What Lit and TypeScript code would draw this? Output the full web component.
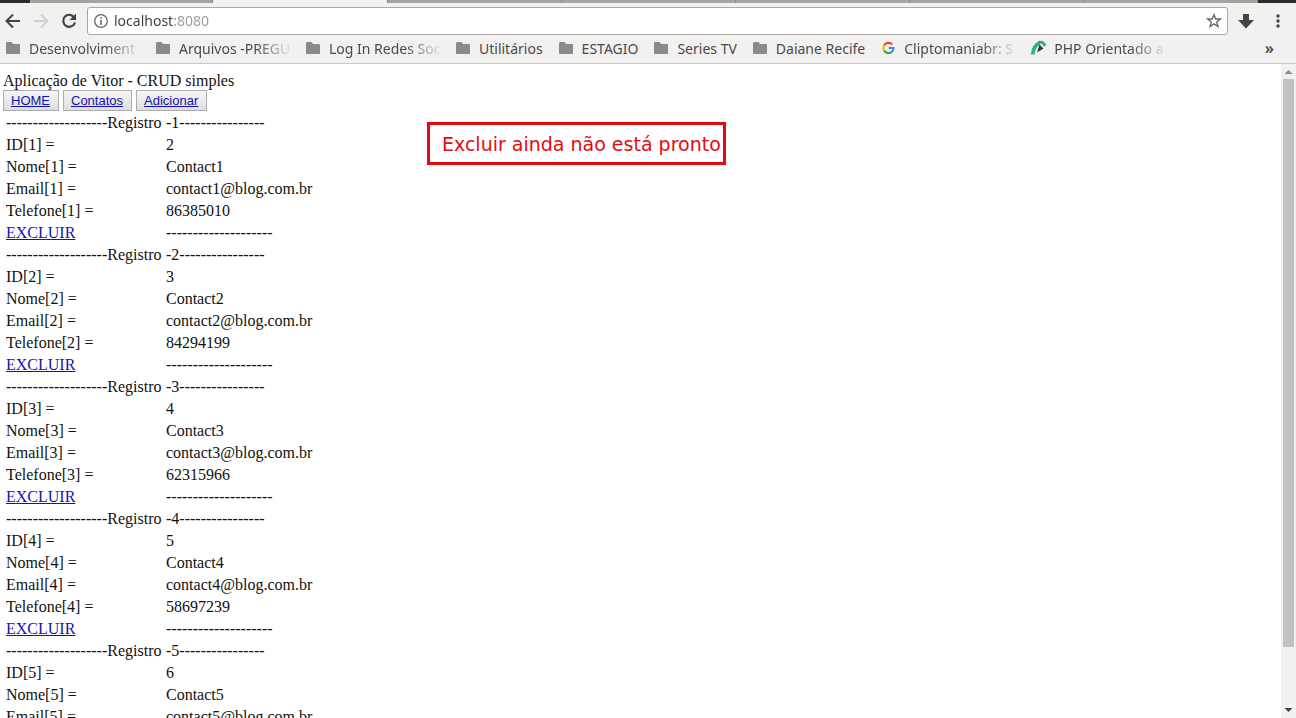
import { LitElement, html, css, svg, nothing } from "lit";
import { customElement, property } from "lit/decorators.js";

interface Bookmark {
  label: string;
  icon: "folder" | "google" | "pen";
  long?: boolean;
}

interface Contact {
  id: number;
  name: string;
  email: string;
  phone: string;
}

const bookmarks: Bookmark[] = [
  { label: "Desenvolviment", icon: "folder", long: true },
  { label: "Arquivos -PREGU", icon: "folder", long: true },
  { label: "Log In Redes Soc", icon: "folder", long: true },
  { label: "Utilitários", icon: "folder" },
  { label: "ESTAGIO", icon: "folder" },
  { label: "Series TV", icon: "folder" },
  { label: "Daiane Recife", icon: "folder" },
  { label: "Cliptomaniabr: S", icon: "google", long: true },
  { label: "PHP Orientado a", icon: "pen", long: true },
];

const contacts: Contact[] = [
  { id: 2, name: "Contact1", email: "contact1@blog.com.br", phone: "86385010" },
  { id: 3, name: "Contact2", email: "contact2@blog.com.br", phone: "84294199" },
  { id: 4, name: "Contact3", email: "contact3@blog.com.br", phone: "62315966" },
  { id: 5, name: "Contact4", email: "contact4@blog.com.br", phone: "58697239" },
  { id: 6, name: "Contact5", email: "contact5@blog.com.br", phone: "" },
];

const icons = {
  folder: svg`<path fill="#8a8a8a" d="M0 3.500Q0 2 1.200 2H5.500L7 4H13Q14 4 14 5V13Q14 14 13 14H1Q0 14 0 13Z"/>`,
  google: svg`<g fill="none" stroke-width="2.200">
    <path stroke="#ea4335" d="M3.200 5.400A5 5 0 0 1 11.200 4.500"/>
    <path stroke="#fbbc05" d="M3.200 5.400A5 5 0 0 0 3.200 10.600"/>
    <path stroke="#34a853" d="M3.200 10.600A5 5 0 0 0 11 11.700"/>
    <path stroke="#4285f4" d="M11 11.700A5 5 0 0 0 12.500 8H7.600"/></g>`,
  pen: svg`<path fill="none" stroke="#2fb083" stroke-width="3.600" d="M1.800 14.500C2 9 4 5 8.500 3"/>
    <path fill="none" stroke="#3aa981" stroke-width="2.800" d="M7.500 2.400C11 1.600 13 3 14 6"/>
    <path fill="#2c3a38" d="M8.500 4.500L12.500 8.500L6 12.500Z"/>`,
};

@customElement("browser-bar")
export class BrowserBar extends LitElement {
  static styles = css`
    :host {
      display: block;
      background: #f2f1f0;
      border-bottom: 1px solid #c9c8c7;
      font-family: "Noto Sans", sans-serif;
      font-size: 14px;
      color: #4a4a4a;
    }
    button {
      border: 0;
      padding: 0;
      background: none;
      display: flex;
      font: inherit;
      color: inherit;
    }
    svg {
      display: block;
      flex: none;
    }
    .tabs {
      display: grid;
      grid-template-columns: 30px 183fr 175fr repeat(5, 174fr) 38px;
      height: 3px;
      background: #a3a3a0;
    }
    .tab {
      border-right: 1px solid #8b8b88;
    }
    .tab.active {
      background: #f2f1f0;
    }
    .frame {
      background: #2d2b29;
    }
    .toolbar {
      display: flex;
      align-items: center;
      padding: 4px 8px 0 4px;
    }
    .nav {
      display: flex;
      gap: 10px;
    }
    .address {
      flex: 1;
      display: flex;
      align-items: center;
      gap: 5px;
      height: 26px;
      margin: 0 8px 0 9px;
      padding: 0 5px;
      border: 1px solid #a9a8a6;
      border-radius: 3px;
      background: #fff;
    }
    .url {
      flex: 1;
      min-width: 0;
      border: 0;
      padding: 0;
      outline: 0;
      font: inherit;
      line-height: 20px;
      color: transparent;
      background: linear-gradient(to right, #3c3c3c 59px, #999 59px);
      -webkit-background-clip: text;
      background-clip: text;
    }
    .actions {
      display: flex;
      gap: 12px;
    }
    .bookmarks {
      display: flex;
      align-items: center;
      height: 26px;
      padding: 0 22px 2px 6px;
      gap: 16px;
    }
    .bookmark {
      display: flex;
      align-items: center;
      gap: 7px;
      color: inherit;
      text-decoration: none;
      white-space: nowrap;
    }
    .faded {
      width: 111px;
      -webkit-mask-image: linear-gradient(to right, #000 76px, transparent 114px);
      mask-image: linear-gradient(to right, #000 76px, transparent 114px);
    }
    .more {
      margin-left: auto;
      font-size: 16px;
      line-height: 20px;
      font-weight: 600;
    }
  `;

  render() {
    return html`
      <div class="tabs">
        <span class="frame"></span><span class="tab"></span><span class="tab active"></span>
        <span class="tab"></span><span class="tab"></span><span class="tab"></span>
        <span class="tab"></span><span class="tab"></span><span class="frame"></span>
      </div>
      <div class="toolbar">
        <div class="nav">
          <button aria-label="Voltar">
            <svg width="18" height="18" viewBox="0 0 18 18" fill="none" stroke="#444" stroke-width="2"><path d="M16 9H3M9 2.500L2.500 9L9 15.500"/></svg>
          </button>
          <button aria-label="Avançar">
            <svg width="18" height="18" viewBox="0 0 18 18" fill="none" stroke="#d0cfce" stroke-width="2"><path d="M2 9H15M9 2.500L15.500 9L9 15.500"/></svg>
          </button>
          <button aria-label="Recarregar">
            <svg width="18" height="18" viewBox="0 0 18 18"><path fill="none" stroke="#444" stroke-width="2.200" d="M14.300 5.500A6 6 0 1 0 15 10.500"/><path fill="#444" d="M16 1.500V8H9.500Z"/></svg>
          </button>
        </div>
        <div class="address">
          <svg width="16" height="16" viewBox="0 0 16 16"><circle cx="8" cy="8" r="6.300" fill="none" stroke="#666" stroke-width="1.300"/><path fill="#666" d="M7.200 7H8.800V12H7.200ZM7.200 4.200H8.800V5.800H7.200Z"/></svg>
          <input class="url" type="text" aria-label="Endereço" value="localhost:8080" />
          <button aria-label="Adicionar aos favoritos">
            <svg width="16" height="16" viewBox="0 0 16 16" fill="none" stroke="#666" stroke-width="1.300"><path d="M8 1.700L9.700 6H14.400L10.700 8.900L12 13.600L8 10.900L4 13.600L5.300 8.900L1.600 6H6.300Z"/></svg>
          </button>
        </div>
        <div class="actions">
          <button aria-label="Baixar">
            <svg width="20" height="20" viewBox="0 0 20 20"><path fill="#444" d="M7 3H13V9H18L10 17.500L2 9H7Z"/></svg>
          </button>
          <button aria-label="Menu">
            <svg width="20" height="20" viewBox="0 0 20 20" fill="#444"><circle cx="10" cy="5" r="1.700"/><circle cx="10" cy="10" r="1.700"/><circle cx="10" cy="15" r="1.700"/></svg>
          </button>
        </div>
      </div>
      <div class="bookmarks">
        ${bookmarks.map(
          (b) => html`<a class="bookmark" href="#">
            <svg width="16" height="16" viewBox="0 0 16 16">${icons[b.icon]}</svg>
            <span class="${b.long ? "faded" : ""}">${b.label}</span>
          </a>`
        )}
        <button class="more" aria-label="Mais favoritos">»</button>
      </div>
    `;
  }
}

@customElement("contact-table")
export class ContactTable extends LitElement {
  @property({ attribute: false }) contacts: Contact[] = [];

  static styles = css`
    table {
      border-spacing: 2px;
      line-height: 18px;
      white-space: nowrap;
    }
    td {
      padding: 1px;
    }
    td:first-child {
      width: 156px;
    }
    a {
      color: #1212b8;
    }
  `;

  render() {
    return html`<table>
      <tbody>
        ${this.contacts.map((c, i) => {
          const n = i + 1;
          return html`
            <tr><td>-------------------Registro</td><td>-${n}----------------</td></tr>
            <tr><td>ID[${n}] =</td><td>${c.id}</td></tr>
            <tr><td>Nome[${n}] =</td><td>${c.name}</td></tr>
            <tr><td>Email[${n}] =</td><td>${c.email}</td></tr>
            ${c.phone
              ? html`<tr><td>Telefone[${n}] =</td><td>${c.phone}</td></tr>
                  <tr><td><a href="#">EXCLUIR</a></td><td>--------------------</td></tr>`
              : nothing}
          `;
        })}
      </tbody>
    </table>`;
  }
}

@customElement("app-root")
export class AppRoot extends LitElement {
  static styles = css`
    :host {
      display: flex;
      flex-direction: column;
      height: 100vh;
      overflow: hidden;
      background: #fff;
      color: #111;
      font: 16px "Liberation Serif", serif;
    }
    .view {
      flex: 1;
      min-height: 0;
      display: flex;
    }
    .page {
      position: relative;
      flex: 1;
      min-width: 0;
      overflow: hidden;
      padding: 8px 3px 0;
    }
    .title {
      line-height: 18px;
    }
    .menu {
      display: flex;
      gap: 4px;
    }
    .item {
      box-sizing: border-box;
      height: 21px;
      padding: 0 8px 0 7px;
      border: 1px solid #adadad;
      background: linear-gradient(#f6f6f6, #dedede);
      font: 13px/19px "Liberation Sans", sans-serif;
      color: #1212b8;
    }
    .note {
      position: absolute;
      left: 427px;
      top: 58px;
      padding: 9px 2px 7px 12px;
      border: 3px solid #e60a0e;
      color: #e60a0e;
      font: 19px/21px "DejaVu Sans", sans-serif;
      white-space: nowrap;
    }
    .scrollbar {
      width: 15px;
      display: flex;
      flex-direction: column;
      background: #f1f1f1;
    }
    .arrow {
      display: block;
      flex: none;
    }
    .track {
      flex: 1;
      padding: 0 2px;
    }
    .thumb {
      height: 91%;
      background: #c1c1c1;
    }
  `;

  render() {
    return html`
      <browser-bar></browser-bar>
      <div class="view">
        <main class="page">
          <div class="title">Aplicação de Vitor - CRUD simples</div>
          <nav class="menu">
            <a class="item" href="#">HOME</a>
            <a class="item" href="#">Contatos</a>
            <a class="item" href="#">Adicionar</a>
          </nav>
          <contact-table .contacts=${contacts}></contact-table>
          <div class="note">Excluir ainda não está pronto</div>
        </main>
        <div class="scrollbar">
          <svg class="arrow" width="15" height="15" viewBox="0 0 15 15"><path fill="#8a8a8a" d="M3.500 10L7.500 6L11.500 10Z"/></svg>
          <div class="track"><div class="thumb"></div></div>
          <svg class="arrow" width="15" height="15" viewBox="0 0 15 15"><path fill="#444" d="M3.500 5L7.500 9L11.500 5Z"/></svg>
        </div>
      </div>
    `;
  }
}
